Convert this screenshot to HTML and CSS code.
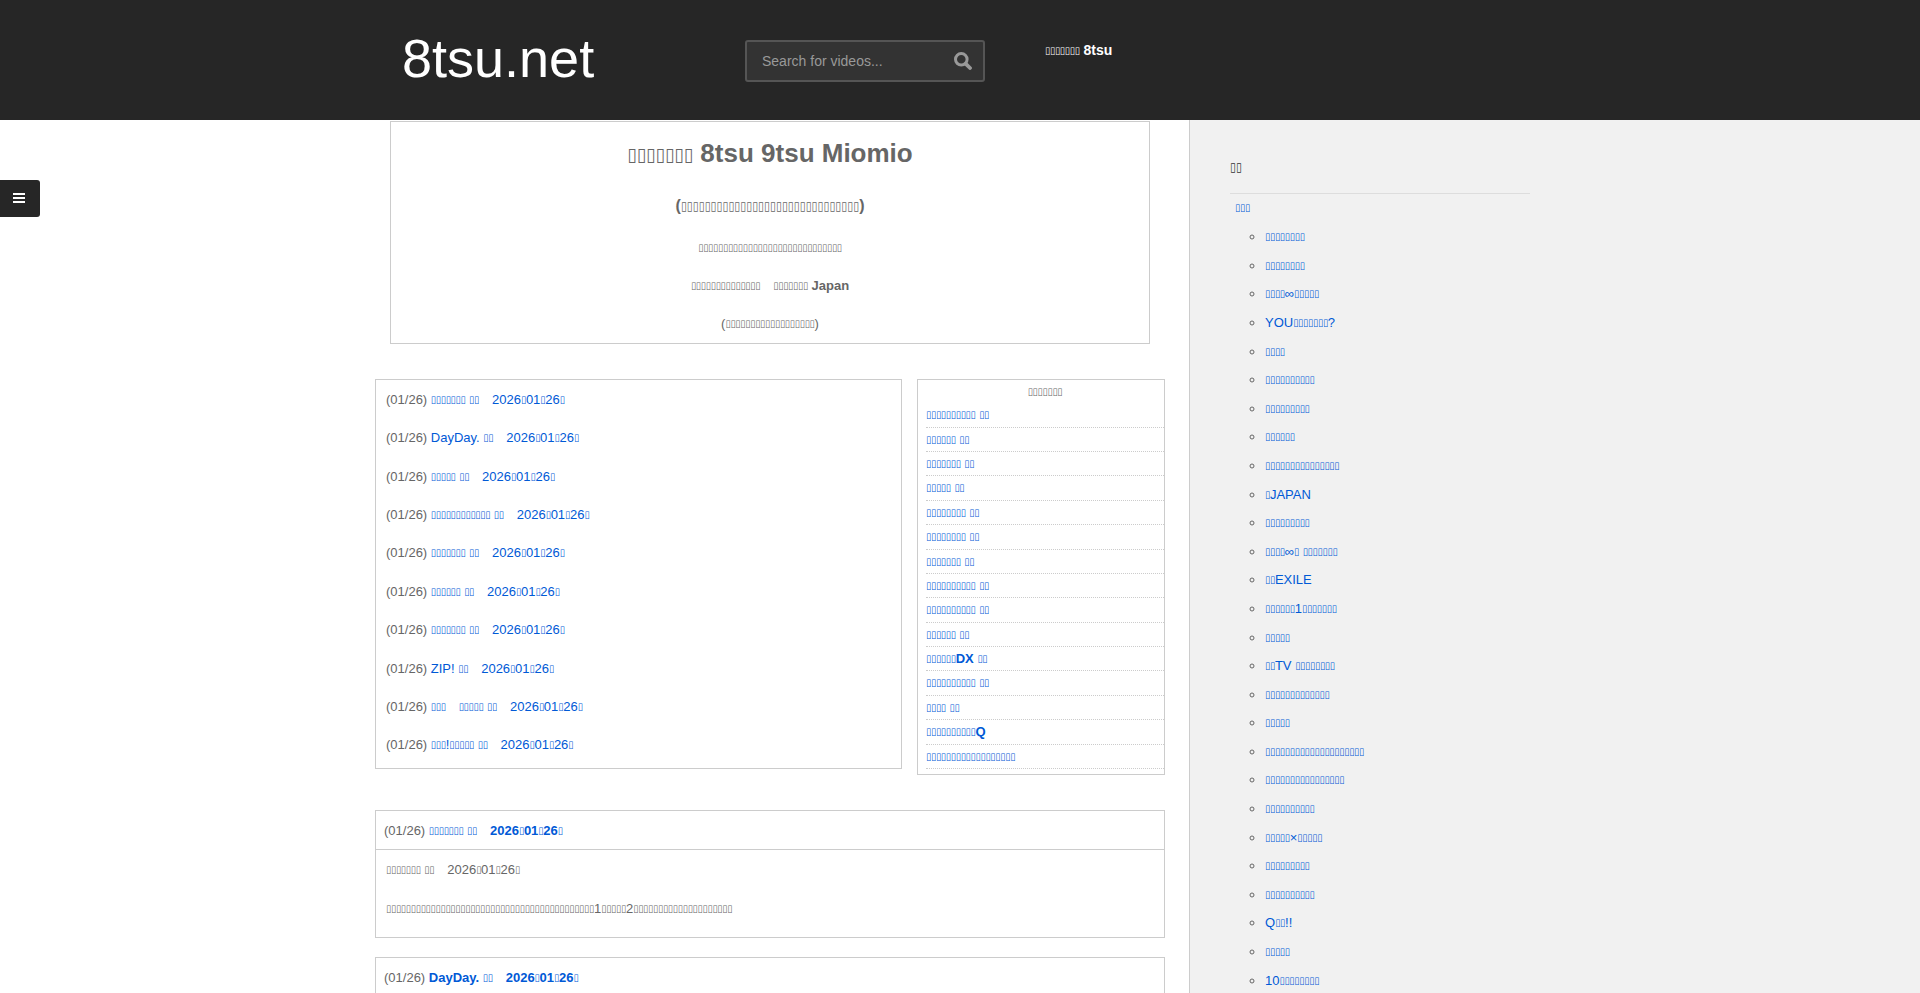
FILE: index.html
```html
<!DOCTYPE html>
<html lang="ja">
<head>
  <meta charset="UTF-8">
  <meta name="viewport" content="width=device-width, initial-scale=1">
  <title>8tsu.net</title>
  <link rel="stylesheet" href="styles.css">
</head>
<body>

  <header class="site-header">
    <div class="header-inner">
      <a class="logo" href="#">8tsu.net</a>
      <form class="search-form">
        <input type="text" name="s" placeholder="Search for videos..." aria-label="Search for videos">
        <button type="submit" aria-label="Search">
          <svg width="18" height="18" viewBox="0 0 18 18">
            <circle cx="7.3" cy="7.3" r="5.8" fill="none" stroke="#999" stroke-width="3"/>
            <path d="M11.8 11.8 L16 16" stroke="#999" stroke-width="3.8" stroke-linecap="round"/>
          </svg>
        </button>
      </form>
      <strong class="tagline"><i>▯▯▯▯▯▯▯</i> 8tsu</strong>
    </div>
  </header>

  <button class="menu-toggle" type="button" aria-label="Menu">
    <span></span><span></span><span></span>
  </button>

  <div class="page">
    <main class="content">
      <section class="intro">
        <h1><i>▯▯▯▯▯▯▯</i> 8tsu 9tsu Miomio</h1>
        <h2>(<i>▯▯▯▯▯▯▯▯▯▯▯▯▯▯▯▯▯▯▯▯▯▯▯▯▯▯▯▯▯▯</i>)</h2>
        <p><i>▯▯▯▯▯▯▯▯▯▯▯▯▯▯▯▯▯▯▯▯▯▯▯▯▯▯▯▯▯</i></p>
        <p><strong><i>▯▯▯▯▯▯▯▯▯▯▯▯▯▯</i>&#x3000;<i>▯▯▯▯▯▯▯</i> Japan</strong></p>
        <p>(<i>▯▯▯▯▯▯▯▯▯▯▯▯▯▯▯▯▯▯</i>)</p>
      </section>

      <div class="lists">
        <ul class="latest">
          <li>(01/26) <a href="#"><i>▯▯▯▯▯▯▯</i> <i>▯▯</i>&#x3000;2026<i>▯</i>01<i>▯</i>26<i>▯</i></a></li>
          <li>(01/26) <a href="#">DayDay. <i>▯▯</i>&#x3000;2026<i>▯</i>01<i>▯</i>26<i>▯</i></a></li>
          <li>(01/26) <a href="#"><i>▯▯▯▯▯</i> <i>▯▯</i>&#x3000;2026<i>▯</i>01<i>▯</i>26<i>▯</i></a></li>
          <li>(01/26) <a href="#"><i>▯▯▯▯▯▯▯▯▯▯▯▯</i> <i>▯▯</i>&#x3000;2026<i>▯</i>01<i>▯</i>26<i>▯</i></a></li>
          <li>(01/26) <a href="#"><i>▯▯▯▯▯▯▯</i> <i>▯▯</i>&#x3000;2026<i>▯</i>01<i>▯</i>26<i>▯</i></a></li>
          <li>(01/26) <a href="#"><i>▯▯▯▯▯▯</i> <i>▯▯</i>&#x3000;2026<i>▯</i>01<i>▯</i>26<i>▯</i></a></li>
          <li>(01/26) <a href="#"><i>▯▯▯▯▯▯▯</i> <i>▯▯</i>&#x3000;2026<i>▯</i>01<i>▯</i>26<i>▯</i></a></li>
          <li>(01/26) <a href="#">ZIP! <i>▯▯</i>&#x3000;2026<i>▯</i>01<i>▯</i>26<i>▯</i></a></li>
          <li>(01/26) <a href="#"><i>▯▯▯</i>&#x3000;<i>▯▯▯▯▯</i> <i>▯▯</i>&#x3000;2026<i>▯</i>01<i>▯</i>26<i>▯</i></a></li>
          <li>(01/26) <a href="#"><i>▯▯▯</i>!<i>▯▯▯▯▯</i> <i>▯▯</i>&#x3000;2026<i>▯</i>01<i>▯</i>26<i>▯</i></a></li>
        </ul>

        <section class="popular">
          <p class="popular-title"><i>▯▯▯▯▯▯▯</i></p>
          <ul>
            <li><a href="#"><i>▯▯▯▯▯▯▯▯▯▯</i> <i>▯▯</i></a></li>
            <li><a href="#"><i>▯▯▯▯▯▯</i> <i>▯▯</i></a></li>
            <li><a href="#"><i>▯▯▯▯▯▯▯</i> <i>▯▯</i></a></li>
            <li><a href="#"><i>▯▯▯▯▯</i> <i>▯▯</i></a></li>
            <li><a href="#"><i>▯▯▯▯▯▯▯▯</i> <i>▯▯</i></a></li>
            <li><a href="#"><i>▯▯▯▯▯▯▯▯</i> <i>▯▯</i></a></li>
            <li><a href="#"><i>▯▯▯▯▯▯▯</i> <i>▯▯</i></a></li>
            <li><a href="#"><i>▯▯▯▯▯▯▯▯▯▯</i> <i>▯▯</i></a></li>
            <li><a href="#"><i>▯▯▯▯▯▯▯▯▯▯</i> <i>▯▯</i></a></li>
            <li><a href="#"><i>▯▯▯▯▯▯</i> <i>▯▯</i></a></li>
            <li><a href="#"><i>▯▯▯▯▯▯</i>DX <i>▯▯</i></a></li>
            <li><a href="#"><i>▯▯▯▯▯▯▯▯▯▯</i> <i>▯▯</i></a></li>
            <li><a href="#"><i>▯▯▯▯</i> <i>▯▯</i></a></li>
            <li><a href="#"><i>▯▯▯▯▯▯▯▯▯▯</i>Q</a></li>
            <li><a href="#"><i>▯▯▯▯▯▯▯▯▯▯▯▯▯▯▯▯▯▯</i></a></li>
          </ul>
        </section>
      </div>

      <article class="post">
        <div class="post-title">(01/26) <a href="#"><i>▯▯▯▯▯▯▯</i> <i>▯▯</i>&#x3000;2026<i>▯</i>01<i>▯</i>26<i>▯</i></a></div>
        <div class="post-body">
          <p><i>▯▯▯▯▯▯▯</i> <i>▯▯</i>&#x3000;2026<i>▯</i>01<i>▯</i>26<i>▯</i></p>
          <p><i>▯▯▯▯▯▯▯▯▯▯▯▯▯▯▯▯▯▯▯▯▯▯▯▯▯▯▯▯▯▯▯▯▯▯▯▯▯▯▯▯▯▯</i>1<i>▯▯▯▯▯</i>2<i>▯▯▯▯▯▯▯▯▯▯▯▯▯▯▯▯▯▯▯▯</i></p>
        </div>
      </article>

      <article class="post">
        <div class="post-title">(01/26) <a href="#">DayDay. <i>▯▯</i>&#x3000;2026<i>▯</i>01<i>▯</i>26<i>▯</i></a></div>
      </article>
    </main>

    <aside class="sidebar">
      <h3><i>▯▯</i></h3>
      <nav class="categories">
        <a href="#"><i>▯▯▯</i></a>
        <ul>
          <li><a href="#"><i>▯▯▯▯▯▯▯▯</i></a></li>
          <li><a href="#"><i>▯▯▯▯▯▯▯▯</i></a></li>
          <li><a href="#"><i>▯▯▯▯</i>∞<i>▯▯▯▯▯</i></a></li>
          <li><a href="#">YOU<i>▯▯▯▯▯▯▯</i>?</a></li>
          <li><a href="#"><i>▯▯▯▯</i></a></li>
          <li><a href="#"><i>▯▯▯▯▯▯▯▯▯▯</i></a></li>
          <li><a href="#"><i>▯▯▯▯▯▯▯▯▯</i></a></li>
          <li><a href="#"><i>▯▯▯▯▯▯</i></a></li>
          <li><a href="#"><i>▯▯▯▯▯▯▯▯▯▯▯▯▯▯▯</i></a></li>
          <li><a href="#"><i>▯</i>JAPAN</a></li>
          <li><a href="#"><i>▯▯▯▯▯▯▯▯▯</i></a></li>
          <li><a href="#"><i>▯▯▯▯</i>∞<i>▯</i> <i>▯▯▯▯▯▯▯</i></a></li>
          <li><a href="#"><i>▯▯</i>EXILE</a></li>
          <li><a href="#"><i>▯▯▯▯▯▯</i>1<i>▯▯▯▯▯▯▯</i></a></li>
          <li><a href="#"><i>▯▯▯▯▯</i></a></li>
          <li><a href="#"><i>▯▯</i>TV <i>▯▯▯▯▯▯▯▯</i></a></li>
          <li><a href="#"><i>▯▯▯▯▯▯▯▯▯▯▯▯▯</i></a></li>
          <li><a href="#"><i>▯▯▯▯▯</i></a></li>
          <li><a href="#"><i>▯▯▯▯▯▯▯▯▯▯▯▯▯▯▯▯▯▯▯▯</i></a></li>
          <li><a href="#"><i>▯▯▯▯▯▯▯▯▯▯▯▯▯▯▯▯</i></a></li>
          <li><a href="#"><i>▯▯▯▯▯▯▯▯▯▯</i></a></li>
          <li><a href="#"><i>▯▯▯▯▯</i>×<i>▯▯▯▯▯</i></a></li>
          <li><a href="#"><i>▯▯▯▯▯▯▯▯▯</i></a></li>
          <li><a href="#"><i>▯▯▯▯▯▯▯▯▯▯</i></a></li>
          <li><a href="#">Q<i>▯▯</i>!!</a></li>
          <li><a href="#"><i>▯▯▯▯▯</i></a></li>
          <li><a href="#">10<i>▯▯▯▯▯▯▯▯</i></a></li>
        </ul>
      </nav>
    </aside>
  </div>

</body>
</html>
```
FILE: styles.css
```css
* {
  box-sizing: border-box;
}

body {
  margin: 0;
  background: #fff;
  color: #666;
  font-family: "Liberation Sans", Arial, sans-serif;
  font-size: 13px;
  line-height: 1.8;
}

h1, h2, h3, p, ul {
  margin: 0;
  padding: 0;
}

ul {
  list-style: none;
}

a {
  color: #0059d6;
  text-decoration: none;
}

a:hover {
  text-decoration: underline;
}

/* narrow box characters */
i {
  font-family: "DejaVu Sans Condensed", "DejaVu Sans", sans-serif;
  font-size: 10px;
  font-style: normal;
  font-weight: normal;
  line-height: 1;
  vertical-align: 1px;
}

/* header */
.site-header {
  background: #262626;
  min-height: 120px;
}

.header-inner {
  display: flex;
  align-items: flex-start;
  max-width: 1170px;
  margin: 0 auto;
}

.logo {
  width: 370px;
  padding: 28px 0 0 27px;
  color: #fff;
  font-size: 54px;
  line-height: 60px;
}

.logo:hover {
  text-decoration: none;
}

.search-form {
  display: flex;
  align-items: center;
  width: 240px;
  height: 42px;
  margin: 40px 60px 0 0;
  padding: 0 11px 0 15px;
  background: #333;
  border: 2px solid #555;
  border-radius: 3px;
}

.search-form input {
  flex: 1;
  min-width: 0;
  padding: 0;
  border: none;
  outline: none;
  background: none;
  color: #999;
  font-family: inherit;
  font-size: 14px;
}

.search-form input::placeholder {
  color: #999;
}

.search-form button {
  display: flex;
  padding: 0;
  border: none;
  background: none;
  cursor: pointer;
}

.tagline {
  padding-top: 38px;
  color: #fff;
  font-size: 14px;
}

/* tab on the left edge that opens the menu */
.menu-toggle {
  position: fixed;
  top: 180px;
  left: 0;
  display: flex;
  flex-direction: column;
  align-items: flex-start;
  justify-content: center;
  gap: 2px;
  width: 40px;
  height: 37px;
  padding: 0 0 1px 13px;
  border: none;
  border-radius: 0 3px 3px 0;
  background: #262626;
  cursor: pointer;
}

.menu-toggle span {
  width: 12px;
  height: 2px;
  background: #fff;
}

/* columns: the sidebar runs on to the right edge of the window */
.page {
  display: grid;
  grid-template-columns: calc(50% + 229px) 1fr;
}

.content {
  width: 100%;
  max-width: 814px;
  margin-left: auto;
  padding: 1px 24px 0 0;
}

.intro {
  display: flex;
  flex-direction: column;
  gap: 15px;
  margin: 0 15px 35px;
  padding: 8px 8px 7px;
  border: 1px solid #ccc;
  text-align: center;
}

.intro h1 {
  font-size: 26px;
}

.intro h1 i {
  font-size: 19px;
}

.intro h2 {
  font-size: 16px;
}

.intro h2 i {
  font-size: 12px;
}

.lists {
  display: flex;
  align-items: flex-start;
  gap: 15px;
  margin-bottom: 35px;
}

.latest {
  display: flex;
  flex: 1;
  flex-direction: column;
  gap: 15px;
  padding: 8px 10px 11px;
  border: 1px solid #ccc;
}

.popular {
  width: 248px;
  padding: 0 0 5px 8px;
  border: 1px solid #ccc;
}

.popular-title {
  text-align: center;
}

.popular li {
  border-bottom: 1px dotted #ccc;
  font-weight: bold;
}

.post {
  margin-bottom: 19px;
  border: 1px solid #ccc;
}

.post-title {
  padding: 8px 8px 7px;
}

.post-title a {
  font-weight: bold;
}

.post-body {
  display: flex;
  flex-direction: column;
  gap: 15px;
  padding: 8px 10px 17px;
  border-top: 1px solid #ccc;
}

/* sidebar */
.sidebar {
  padding: 32px 15px 0 40px;
  background: #f1f1f1;
  border-left: 1px solid #ccc;
}

.sidebar h3 {
  max-width: 300px;
  padding-bottom: 10px;
  border-bottom: 1px solid #ddd;
  color: #333;
  font-size: 17px;
  font-weight: normal;
}

.sidebar h3 i {
  font-size: 12px;
}

.categories {
  padding-left: 5px;
  line-height: 2.2;
}

.categories ul {
  padding: 1px 0 0 30px;
  list-style: circle;
}
```
